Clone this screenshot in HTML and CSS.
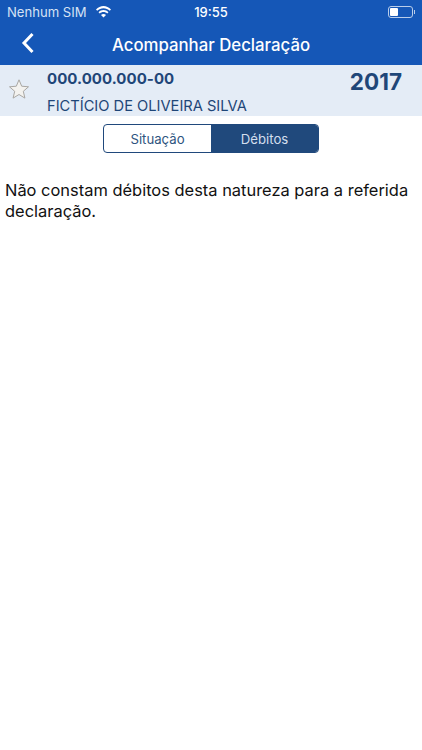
FILE: index.html
```
<!DOCTYPE html>
<html lang="pt">
<head>
<meta charset="utf-8">
<title>Acompanhar Declaração</title>
<link rel="stylesheet" href="styles.css">
</head>
<body>
<header class="appbar">
  <div class="status">
    <div class="status-left">
      <span class="carrier">Nenhum SIM</span>
      <svg class="wifi" width="17" height="12" viewBox="0 0 17 12"><path d="M8.5 2.2c2.4 0 4.6.9 6.3 2.5l1.2-1.3C13.9 1.300 11.300 0 8.500 0S3.100 1.300 1 3.400l1.200 1.300C3.900 3.100 6.100 2.200 8.500 2.200z" fill="#fff"/><path d="M8.500 6c1.400 0 2.700.5 3.700 1.500l1.300-1.300C12.100 4.800 10.400 4 8.500 4s-3.600.8-5 2.200l1.300 1.300C5.800 6.500 7.100 6 8.500 6z" fill="#fff"/><path d="M8.500 11.500l2.500-2.600c-.6-.6-1.500-1-2.500-1s-1.900.4-2.500 1z" fill="#fff"/></svg>
    </div>
    <span class="time">19:55</span>
    <div class="battery"><span class="battery-body"><span class="battery-level"></span></span><span class="battery-tip"></span></div>
  </div>
  <nav class="navbar">
    <svg class="back" width="14" height="22" viewBox="0 0 14 22"><path d="M11.500 2L3 11l8.500 9" fill="none" stroke="#fff" stroke-width="3"/></svg>
    <h1 class="title">Acompanhar Declaração</h1>
  </nav>
</header>
<section class="summary">
  <svg class="star" width="22" height="22" viewBox="0 0 22 22"><path d="M11 1.800l2.700 6.400 6.800.6-5.200 4.500 1.600 6.800-5.900-3.600-5.900 3.600 1.600-6.800L1.500 8.800l6.800-.6z" fill="#f3f2ef" stroke="#a9a7a3" stroke-width="1"/></svg>
  <div class="person">
    <div class="cpf">000.000.000-00</div>
    <div class="name">FICTÍCIO DE OLIVEIRA SILVA</div>
  </div>
  <div class="year">2017</div>
</section>
<div class="tabs-wrap">
  <div class="tabs">
    <div class="tab">Situação</div>
    <div class="tab tab-active">Débitos</div>
  </div>
</div>
<p class="message">Não constam débitos desta natureza para a referida declaração.</p>
</body>
</html>
```
FILE: styles.css
```
* { box-sizing: border-box; }
html, body { margin: 0; padding: 0; }
body {
  width: 422px;
  height: 750px;
  background: #fff;
  font-family: Inter, "Liberation Sans", sans-serif;
  overflow: hidden;
}
.appbar { background: #1557b7; height: 65px; color: #fff; }
.status {
  height: 24px;
  display: flex;
  align-items: center;
  justify-content: space-between;
  padding: 0 7px 0 7px;
  position: relative;
  font-size: 13px;
}
.status-left { display: flex; align-items: center; gap: 8px; }
.carrier { color: #d5e2f4; font-size: 13.100px; }
.time { position: absolute; left: 0; right: 0; text-align: center; font-weight: 500; font-size: 13px; }
.battery { display: flex; align-items: center; }
.battery-body {
  width: 25px; height: 12px; border: 1px solid #b9cdea; border-radius: 3px; padding: 1px; display: block;
}
.battery-level { display: block; width: 8px; height: 8px; background: #fff; border-radius: 1px; }
.battery-tip { width: 1.500px; height: 4px; background: #b9cdea; margin-left: 1px; }
.navbar {
  height: 41px;
  display: flex;
  align-items: center;
  justify-content: center;
  position: relative;
}
.back { position: absolute; left: 21px; top: 8px; }
.title { margin: 0; font-size: 16.800px; font-weight: 500; line-height: 38px; }
.summary {
  height: 51px;
  background: #e4ecf6;
  display: flex;
  align-items: flex-start;
  padding: 0 20px 0 8px;
  color: #1f4678;
}
.star { margin-top: 13px; flex: none; }
.person { margin-left: 17px; flex: 1; }
.cpf { font-size: 15px; font-weight: 700; line-height: 18px; margin-top: 5px; letter-spacing: .05px; }
.name { font-size: 14.650px; line-height: 18px; margin-top: 9px; }
.year { font-size: 22.500px; font-weight: 700; line-height: 28px; margin-top: 3px; }
.tabs-wrap { display: flex; justify-content: center; padding-top: 8px; }
.tabs {
  width: 216px;
  height: 29px;
  display: flex;
  border: 1px solid #20497c;
  border-radius: 4px;
  overflow: hidden;
  font-size: 13.200px;
}
.tab {
  flex: 1;
  display: flex;
  align-items: center;
  justify-content: center;
  color: #2e5480;
}
.tab-active { background: #20497c; color: #d3dfee; }
.message {
  margin: 27px 0 0;
  padding: 0 5px;
  font-size: 16.450px;
  line-height: 21px;
  color: #111;
}
```
